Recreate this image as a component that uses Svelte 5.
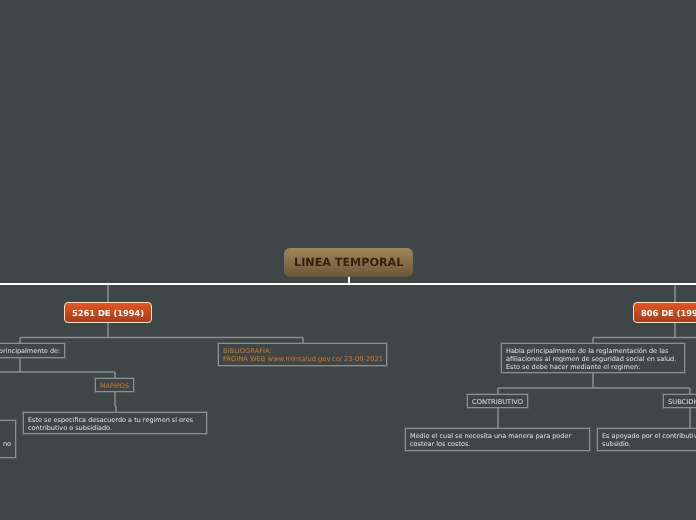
<script lang="ts">
  // mind map canvas: node places are the content here
  type Node = { x: number; y: number; w: number; h: number; lines: string[]; kind?: string };

  const nodes: Node[] = [
    { x: -60, y: 343, w: 125, h: 15, lines: ['Habla principalmente de:'], kind: 'right' },
    { x: 95, y: 378, w: 39, h: 14, lines: ['MAPIPOS'], kind: 'link' },
    { x: 23, y: 412, w: 184, h: 22, lines: ['Este se especifica desacuerdo a tu regimen si eres', 'contributivo o subsidiado.'] },
    { x: -170, y: 420, w: 186, h: 38, lines: ['', '', 'no', ''], kind: 'right' },
    { x: 218, y: 343, w: 169, h: 23, lines: ['BIBLIOGRAFIA:', 'PAGINA WEB www.minsalud.gov.co/ 23-09-2021'], kind: 'link wide' },
    { x: 501, y: 343, w: 184, h: 30, lines: ['Habla principalmente de la reglamentación de las', 'afiliaciones al regimen de seguridad social en salud.', 'Esto se debe hacer mediante el regimen:'] },
    { x: 467, y: 394, w: 61, h: 14, lines: ['CONTRIBUTIVO'], kind: 'wide' },
    { x: 663, y: 394, w: 53, h: 14, lines: ['SUBCIDIO'], kind: 'wide' },
    { x: 405, y: 428, w: 185, h: 23, lines: ['Medio el cual se necesita una manera para poder', 'costear los costos.'] },
    { x: 597, y: 428, w: 184, h: 23, lines: ['Es apoyado por el contributivo y el', 'subsidio.'] }
  ];

  const branches = [
    { x: 64, w: 88, title: '5261 DE (1994)' },
    { x: 633, w: 85, title: '806 DE (1994)' }
  ];

  const white = ['M0 284H696', 'M349 277V284'];
  const gray = [
    'M108 285V302M675 285V302',
    'M108 323V337.5M20 337.5H303M20 337.5V343M303 337.5V343',
    'M20 358V372M0 372H115M115 372V378M115 392V405L116 407V412',
    'M675 323V337.5M593 337.5H696M593 337.5V343',
    'M593 373V388M498 388H690M498 388V394M690 388V394M498 408V428M690 408V428'
  ];
</script>

<div class="map">
  <svg class="wires" width="696" height="520">
    {#each gray as d}<path {d} class="thin" />{/each}
    {#each white as d}<path {d} class="thick" />{/each}
  </svg>

  <div class="root"><span class="txt">LINEA TEMPORAL</span></div>

  {#each branches as b}
    <div class="branch" style="left:{b.x}px;width:{b.w}px"><span class="txt">{b.title}</span></div>
  {/each}

  {#each nodes as n}
    <div class="node {n.kind ?? ''}" style="left:{n.x}px;top:{n.y}px;width:{n.w}px;height:{n.h}px">
      {#each n.lines as line}<div class="line txt">{line}</div>{/each}
    </div>
  {/each}
</div>

<style>
  :global(body) { margin: 0; background: #3f4647; }
  .map {
    position: relative;
    width: 696px;
    height: 520px;
    overflow: hidden;
    background: #3f4647;
    font-family: "DejaVu Sans", Verdana, sans-serif;
    text-rendering: geometricPrecision;
  }
  /* own layer so the text is antialiased in grey like the reference */
  .txt { display: block; will-change: transform; }
  .wires { position: absolute; left: 0; top: 0; }
  .thin { fill: none; stroke: #8b9091; stroke-width: 1.5; }
  .thick { fill: none; stroke: #ffffff; stroke-width: 2; }
  .root {
    position: absolute;
    left: 284px;
    top: 248px;
    width: 129px;
    height: 29px;
    padding-bottom: 1px;
    box-sizing: border-box;
    display: flex;
    align-items: center;
    justify-content: center;
    border-radius: 6px;
    background: linear-gradient(#a08658, #6d5637);
    color: #3a1d0c;
    font-size: 11.2px;
    font-weight: 700;
  }
  .branch {
    position: absolute;
    top: 302px;
    height: 21px;
    padding-left: 7px;
    box-sizing: border-box;
    display: flex;
    align-items: center;
    border: 1px solid #f0e6e0;
    border-radius: 4px;
    background: linear-gradient(#e8531f, #a63e17);
    color: #fff;
    font-size: 8.3px;
    font-weight: 700;
    white-space: nowrap;
  }
  .node {
    position: absolute;
    box-sizing: border-box;
    display: flex;
    flex-direction: column;
    justify-content: center;
    padding: 1px 4px 0;
    border: 1px solid #8b9091;
    box-shadow: 0 0 0 1px rgba(139, 144, 145, 0.3);
    background: #3f4647;
    color: #dfe2e2;
    font-size: 6.5px;
    line-height: 8px;
    white-space: nowrap;
  }
  .line { min-height: 8px; }
  .right { align-items: flex-end; }
  .link { color: #d9791f; }
  .wide { font-size: 6.7px; }
</style>
